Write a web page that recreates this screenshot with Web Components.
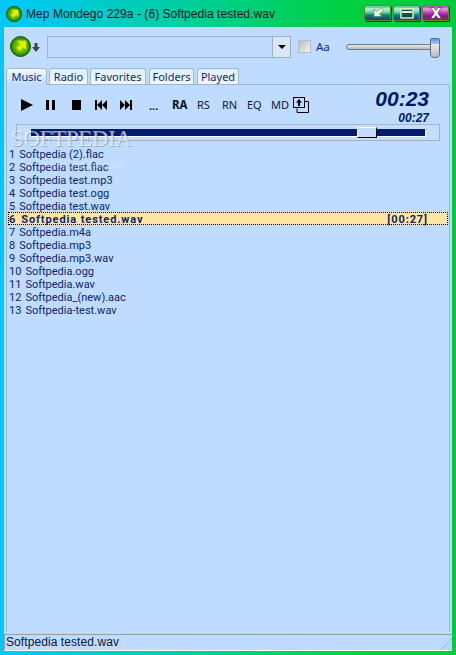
<!DOCTYPE html>
<html><head><meta charset="utf-8">
<style>
html,body{margin:0;padding:0;background:#bfdbff;}
body{width:456px;height:655px;overflow:hidden;font:11px "Noto Sans",Arial,sans-serif;}
</style></head>
<body>
<mm-window>
  <mm-titlebar slot="title">Mep Mondego 229a - (6) Softpedia tested.wav</mm-titlebar>
  <mm-toolbar></mm-toolbar>
  <mm-tabs></mm-tabs>
  <mm-panel>
    <mm-controls></mm-controls>
    <mm-seek></mm-seek>
    <mm-playlist></mm-playlist>
  </mm-panel>
  <mm-status>Softpedia tested.wav</mm-status>
</mm-window>
<script>
const LOGO=(s)=>`<svg width="${s}" height="${s}" viewBox="0 0 22 22" style="display:block">
<defs><radialGradient id="g" cx=".5" cy=".5" r=".55"><stop offset="0" stop-color="#b8e810"/><stop offset=".6" stop-color="#4fb000"/><stop offset="1" stop-color="#0c6400"/></radialGradient></defs>
<circle cx="11" cy="11" r="10.5" fill="url(#g)" stroke="#0b5a0a" stroke-width="1"/>
<path d="M7 5h10v10l-3-3-4 4-3.400-3.400 4-4z" fill="#e8f000" stroke="#9cc400" stroke-width=".6"/></svg>`;
function def(name,css,html){
  customElements.define(name,class extends HTMLElement{
    constructor(){super();const r=this.attachShadow({mode:'open'});
      r.innerHTML=`<style>${css}</style>${typeof html==='function'?html():html}`;}
  });
}
def('mm-window',`
:host{display:block;width:456px;height:655px;box-sizing:border-box;padding:0 4px 4px;position:relative;
 background:linear-gradient(90deg,#00c8ff 0%,#00cfa0 40%,#00d040 75%,#00cc3c 100%);}
.client{display:flex;flex-direction:column;height:624px;background:#bfdbff;position:relative;border-bottom:1px solid #fff;box-sizing:border-box;}
.tb{display:block;height:27px}
.wm{position:absolute;left:7px;top:103px;font:23px/18px "Liberation Serif",serif;letter-spacing:-.4px;color:rgba(255,255,255,.6);text-shadow:1px 1px 0 rgba(110,130,160,.5);pointer-events:none;white-space:nowrap;z-index:3}
.wm2{position:absolute;left:42px;top:133px;font:9px/10px "Liberation Sans",sans-serif;color:rgba(255,255,255,.3);pointer-events:none;z-index:3}
.grip{position:absolute;right:0;bottom:0;width:16px;height:16px;background:repeating-linear-gradient(135deg,transparent 0 2px,#a9c2e2 2px 3px);clip-path:polygon(100% 0,100% 100%,0 100%);z-index:3}
`,`<div class="tb"><slot name="title"></slot></div><div class="client"><slot></slot>
<div class="wm">SOFTPEDIA</div><div class="wm2">www.softpedia.com</div><div class="grip"></div></div>`);
const wb=(bg,icon,bc)=>`<div class="b" style="background:${bg};border-color:${bc}">${icon}</div>`;
def('mm-titlebar',`
:host{display:flex;align-items:center;height:27px;color:#04151f;font:12px "Liberation Sans",sans-serif;letter-spacing:.05px;white-space:nowrap}
.logo{margin:0 4px 0 2px;flex:none}
.t{flex:1;padding-top:1px}
.btns{display:flex;gap:2px;margin:-1px 3px 0 0}
.b{width:25px;height:14px;border:1px solid;border-radius:2px;display:flex;align-items:center;justify-content:center;box-shadow:inset 0 1px 0 rgba(255,255,255,.25),1px 1px 0 #123a70}
`,()=>`<div class="logo">${LOGO(16)}</div><div class="t"><slot></slot></div><div class="btns">
${wb('linear-gradient(#1fb070 0,#b8f0d8 20%,#60d8a8 45%,#0e7f80 65%,#12407a 100%)','<svg width="12" height="12" viewBox="0 0 12 12"><path d="M9.500 1l2 2L7.500 7 10 9.500H2V2l2.500 2.500z" fill="#f4f6d8" stroke="#5a6a20" stroke-width=".5"/></svg>','#5f8a20')}
${wb('linear-gradient(#1fb070 0,#b8f0d8 20%,#60d8a8 45%,#0e7f80 65%,#12407a 100%)','<svg width="14" height="11" viewBox="0 0 14 11"><rect x="1" y="1" width="12" height="9" fill="#0b5060" stroke="#e8f2b0" stroke-width="1.4"/><rect x="2" y="3" width="10" height="2" fill="#e8f2b0"/></svg>','#5f8a20')}
${wb('linear-gradient(#8a1a90 0,#f0a0e8 20%,#d040c8 45%,#801890 70%,#a02050 100%)','<svg width="14" height="12" viewBox="0 0 14 12"><path d="M1.500 .5h3.500l2 3 2-3h3.500L8.800 6l3.700 5.500H9l-2-3-2 3H1.500L5.200 6z" fill="#fff" stroke="#401050" stroke-width=".6"/></svg>','#6a8a20')}
</div>`);
def('mm-toolbar',`
:host{display:flex;align-items:flex-start;height:41px;box-sizing:border-box;padding:9px 0 0 6px;flex:none}
.arrow{margin:7px 0 0 1px;width:8px;flex:none}
.combo{margin-left:7px;width:244px;height:22px;box-sizing:border-box;border:1px solid #9fb0cb;display:flex;justify-content:flex-end;flex:none}
.dd{width:17px;background:#dbe6f5;border-left:1px solid #9fb0cb;display:flex;align-items:center;justify-content:center}
.dd i{border:4px solid transparent;border-top:4px solid #000;border-bottom:0;display:block}
.chk{margin:4px 0 0 7px;width:13px;height:13px;box-sizing:border-box;border:1px solid #aebdd0;background:linear-gradient(135deg,#bcbcbc,#f4f4f4);flex:none}
.aa{margin:3px 0 0 5px;color:#0a2a9c;font:11.5px/15px "Noto Sans",sans-serif;width:30px;flex:none}
.slider{position:relative;width:94px;height:22px;flex:none}
.slider .tr{position:absolute;left:0;right:5px;top:8px;height:4px;background:linear-gradient(#e8e8e8,#bcbcbc);border:1px solid #6d7a88;border-radius:3px}
.slider .th{position:absolute;right:0;top:2px;width:10px;height:20px;box-sizing:border-box;border:1px solid #5d6d85;border-radius:2px 2px 4px 4px;background:linear-gradient(#5e96e8 0,#9cc0ee 25%,#e6e6e6 30%,#bdbdbd 100%)}
`,()=>`<div style="flex:none">${LOGO(21)}</div>
<svg class="arrow" width="8" height="9" viewBox="0 0 8 9"><path d="M2.500 0h3v4H8L4 9 0 4h2.500z" fill="#444"/></svg>
<div class="combo"><div class="dd"><i></i></div></div>
<div class="chk"></div><div class="aa">Aa</div>
<div class="slider"><div class="tr"></div><div class="th"></div></div>`);
def('mm-tabs',`
:host{display:flex;height:16px;padding-left:2px;gap:2px;flex:none;position:relative;z-index:2;align-items:flex-start}
span{box-sizing:border-box;height:16px;display:block;text-align:center;border:1px solid #9db8dc;border-bottom:0;border-radius:3px 3px 0 0;background:linear-gradient(#dfeeff,#f2f8ff);color:#0a2a78;font:11px/15px "Noto Sans",sans-serif;flex:none}
.on{height:17px;background:#bfdbff linear-gradient(#f4faff,#bfdbff);border-bottom:1px solid #bfdbff}
`,`<span class="on" style="width:41px">Music</span><span style="width:39px">Radio</span><span style="width:56px;margin-right:1px">Favorites</span><span style="width:45px;margin-right:1px">Folders</span><span style="width:42px">Played</span>`);
def('mm-panel',`
:host{display:flex;flex-direction:column;flex:1;margin:0 2px 2px;border:1px solid #9db4d4;border-bottom:0;min-height:0;position:relative}
`,`<slot></slot>`);
const ic=(w,d)=>`<svg width="${w}" height="12" viewBox="0 0 ${w} 12" style="display:block;flex:none">${d}</svg>`;
def('mm-controls',`
:host{display:flex;align-items:center;height:39px;padding-left:14px;position:relative;color:#101a30;font:11px "Noto Sans",sans-serif;flex:none}
.c{display:flex;align-items:center;flex:none}
b{font-weight:bold;color:#0a1020}
.clock{position:absolute;right:20px;top:2px;color:#00186c;text-align:right;font:italic bold 21px/24px "Liberation Sans",sans-serif}
.clock small{display:block;font-size:12px;line-height:14px;letter-spacing:0}
`,()=>`<div class="c" style="width:25px">${ic(12,'<path d="M0 0l12 6-12 6z" fill="#000"/>')}</div>
<div class="c" style="width:26px">${ic(9,'<rect x="0" y="1" width="3" height="10"/><rect x="6" y="1" width="3" height="10"/>')}</div>
<div class="c" style="width:23px">${ic(10,'<rect x="0" y="1" width="9" height="10"/>')}</div>
<div class="c" style="width:25px">${ic(12,'<rect x="0" y="1" width="2" height="10"/><path d="M7 1v10L2 6zM12 1v10L7 6z"/>')}</div>
<div class="c" style="width:29px">${ic(12,'<rect x="10" y="1" width="2" height="10"/><path d="M0 1v10l5-5zM5 1v10l5-5z"/>')}</div>
<div class="c" style="width:23px;font-weight:bold;position:relative;top:1px">...</div>
<div class="c" style="width:25px"><b style="font-size:11.5px">RA</b></div>
<div class="c" style="width:25px">RS</div>
<div class="c" style="width:25px">RN</div>
<div class="c" style="width:24px">EQ</div>
<div class="c" style="width:22px">MD</div>
<svg width="16" height="16" viewBox="0 0 16 16" style="flex:none"><rect x=".5" y=".5" width="11" height="10" fill="none" stroke="#000"/><path d="M4 11.500v4h11.500v-11H12" fill="none" stroke="#000"/><path d="M6 2l3 3.500H7V9H5V5.500H3z"/></svg>
<div class="clock">00:23<small>00:27</small></div>`);
def('mm-seek',`
:host{display:block;margin-left:9px;width:424px;height:17px;box-sizing:border-box;border:1px solid #9fb0cb;border-top:1px solid #a6b6cf;background:#c6dcfb;position:relative;flex:none}
.tr{position:absolute;left:14px;top:4px;width:394px;height:7px;background:#001a6c;box-shadow:1px 1px 0 #fff}
.th{position:absolute;left:340px;top:2px;width:20px;height:11px;box-sizing:border-box;background:#c6dcfb;border-top:1px solid #fff;border-left:1px solid #fff;border-right:1px solid #000;border-bottom:1px solid #000}
`,`<div class="tr"></div><div class="th"></div>`);
const files=['Softpedia (2).flac','Softpedia test.flac','Softpedia test.mp3','Softpedia test.ogg','Softpedia test.wav','Softpedia tested.wav','Softpedia.m4a','Softpedia.mp3','Softpedia.mp3.wav','Softpedia.ogg','Softpedia.wav','Softpedia_(new).aac','Softpedia-test.wav'];
def('mm-playlist',`
:host{display:block;margin:6px 1px 0 1px;flex:none;color:#0c2470;font:11px/15px Roboto,sans-serif}
.r{height:13px;white-space:pre;display:flex;box-sizing:border-box;padding:0 20px 0 1px}
.n{margin-right:4px}
.m{flex:1}
.s{background:#ffe5a0;font-weight:bold;outline:1px dotted #000;outline-offset:-1px;letter-spacing:.9px}
.s .n{margin-right:5px}
`,()=>files.map((f,i)=>`<div class="r${i==5?' s':''}"><span class="n">${i+1}</span><span class="m">${f}</span>${i==5?'<span>[00:27]</span>':''}</div>`).join(''));
def('mm-status',`
:host{display:block;height:16px;flex:none;border-top:1px solid #9a9aa2;border-left:1px solid #9a9aa2;box-sizing:border-box;padding-left:1px;font:12px/15px "Liberation Sans",sans-serif;letter-spacing:.08px;color:#10182c;white-space:nowrap}
`,`<slot></slot>`);
</script>
</body></html>
